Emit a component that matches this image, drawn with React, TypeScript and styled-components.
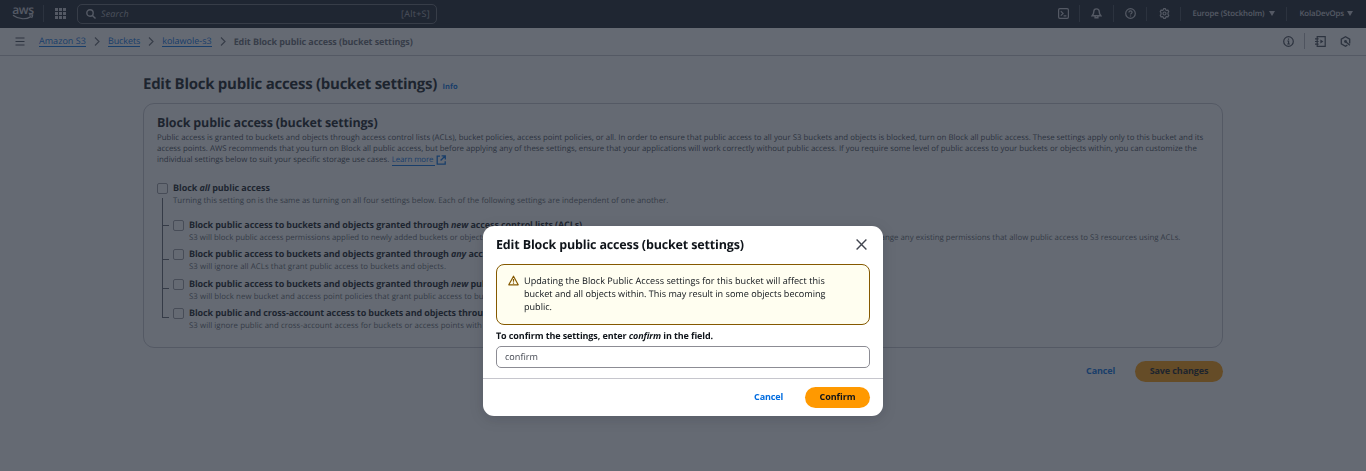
import React, { ReactNode } from 'react';
import styled, { createGlobalStyle, css } from 'styled-components';

const GlobalStyle = createGlobalStyle`
  * { box-sizing: border-box; }
  html, body { margin: 0; padding: 0; height: 471px; overflow: hidden; }
  body {
    background: #ffffff;
    color: #0f141a;
    font-family: 'Open Sans', 'Noto Sans', sans-serif;
    font-size: 9px;
    text-rendering: geometricPrecision;
  }
  svg { display: block; flex: none; }
`;

type Track = { $track?: number };
const track = css<Track>`
  letter-spacing: ${(p) => p.$track ?? 0}px;
  white-space: nowrap;
`;

const Page = styled.div`
  height: 471px;
  overflow: hidden;
`;

/* Top navigation */
const TopNav = styled.header`
  height: 28px;
  display: flex;
  align-items: center;
  background: #161d26;
  color: #c6c6cd;
  padding: 0 13px 1px 12px;
`;
const Logo = styled.div`
  width: 22px;
  height: 17px;
  display: flex;
  flex-direction: column;
  align-items: center;
  font-size: 12px;
  font-weight: 600;
  line-height: 9px;
  letter-spacing: -0.3px;
`;
const NavRule = styled.span<{ $tall?: boolean; $gap: number; $after: number }>`
  width: 1px;
  height: ${(p) => (p.$tall ? 17 : 14)}px;
  margin: 0 ${(p) => p.$after}px 0 ${(p) => p.$gap}px;
  background: #424650;
`;
const SearchBox = styled.div`
  width: 360px;
  height: 20px;
  margin-left: 11px;
  padding: 0 6px 0 8px;
  display: flex;
  align-items: center;
  border: 1px solid #656871;
  border-radius: 5px;
`;
const SearchHint = styled.span<Track>`
  ${track}
  margin-left: 5px;
  font-size: 9px;
  font-style: italic;
  color: #a4a4ad;
`;
const Shortcut = styled.span<Track>`
  ${track}
  margin-left: auto;
  font-size: 9px;
  color: #a4a4ad;
`;
const NavTools = styled.div`
  margin-left: auto;
  display: flex;
  align-items: center;
`;
const NavMenu = styled.span<Track>`
  ${track}
  font-size: 7.8px;
  font-weight: 600;
`;
const Caret = styled.span<{ $gap: number }>`
  margin-left: ${(p) => p.$gap}px;
  border: 3px solid transparent;
  border-top: 5px solid #c6c6cd;
  border-bottom: 0;
`;

/* Breadcrumb bar */
const CrumbBar = styled.nav`
  height: 28px;
  display: flex;
  align-items: center;
  padding: 0 15px 1px 15px;
  border-bottom: 1px solid #c6c6cd;
`;
const MenuIcon = styled.span`
  display: flex;
  margin-right: 14px;
  color: #424650;
`;
const Crumb = styled.a<Track>`
  ${track}
  height: 12px;
  line-height: 11px;
  font-size: 9px;
  color: #006ce0;
  border-bottom: 1px solid #006ce0;
`;
const CurrentCrumb = styled.span<Track>`
  ${track}
  font-size: 9px;
  font-weight: 700;
  color: #656871;
`;
const CrumbChevron = styled.span`
  display: flex;
  width: 22px;
  justify-content: center;
  color: #656871;
`;
const CrumbTools = styled.div`
  margin-left: auto;
  display: flex;
  align-items: center;
  color: #424650;
`;
const CrumbRule = styled.span`
  width: 1px;
  height: 16px;
  margin: 0 10px;
  background: #b4b4bb;
`;
const IconGap = styled.span`
  width: 14px;
`;

/* Page content */
const Main = styled.main`
  width: 1080px;
  margin: 0 auto;
  padding-top: 17px;
`;
const TitleRow = styled.div`
  height: 30px;
  display: flex;
  align-items: baseline;
`;
const PageTitle = styled.h1<Track>`
  ${track}
  margin: 0;
  font-size: 15px;
  font-weight: 700;
  line-height: 22px;
`;
const InfoLink = styled.a<Track>`
  ${track}
  margin-left: 5.5px;
  font-size: 7.5px;
  font-weight: 700;
  color: #006ce0;
`;
const Panel = styled.section`
  height: 245px;
  border: 1px solid #c6c6cd;
  border-radius: 11px;
  padding: 10px 13px 0;
`;
const PanelTitle = styled.h2<Track>`
  ${track}
  margin: 0 0 1px;
  font-size: 12.5px;
  font-weight: 700;
  line-height: 18px;
`;
const Summary = styled.div`
  color: #424650;
  font-size: 7.885px;
  line-height: 11px;
`;
const SummaryLine = styled.div<Track>`
  ${track}
  display: flex;
`;
const LearnMore = styled.a`
  display: flex;
  margin-left: 2.5px;
  height: 11px;
  color: #006ce0;
`;
const LearnText = styled.span<Track>`
  ${track}
  height: 11px;
  line-height: 11px;
  border-bottom: 1px solid #006ce0;
  padding-right: 2px;
  margin-right: 1px;
`;
const Option = styled.div`
  height: 29.33px;
  display: grid;
  grid-template-columns: 11px 1fr;
  column-gap: 5px;
`;
const Checkbox = styled.span`
  width: 11px;
  height: 11px;
  margin-top: 1px;
  border: 1px solid #9a9aa2;
  border-radius: 2px;
`;
const OptionLabel = styled.div<Track>`
  ${track}
  font-size: 9px;
  font-weight: 700;
  line-height: 12px;
`;
const OptionHint = styled.div<Track>`
  ${track}
  margin-top: 1px;
  font-size: 7.87px;
  line-height: 13px;
  color: #5c5f69;
`;
const AllAccess = styled.div`
  margin-top: 16px;
  height: 16px;
`;
const Tree = styled.div`
  display: flex;
  margin-left: 5px;
`;
const Branches = styled.div`
  width: 7px;
  margin-right: 4px;
`;
const Branch = styled.div<{ $height: number }>`
  height: ${(p) => p.$height}px;
  border: solid #5f636d;
  border-width: 0 0 1px 1px;
`;
const Options = styled.div`
  padding-top: 21px;
`;
const Actions = styled.div<{ $top: number; $right: number }>`
  display: flex;
  justify-content: flex-end;
  align-items: center;
  padding: ${(p) => p.$top}px ${(p) => p.$right}px 0 0;
`;
const TextButton = styled.button<Track>`
  ${track}
  border: 0;
  padding: 0 0 2px;
  background: none;
  font: 700 9px 'Open Sans', 'Noto Sans', sans-serif;
  color: #006ce0;
`;
const PrimaryButton = styled.button<Track & { $width: number; $gap: number }>`
  ${track}
  width: ${(p) => p.$width}px;
  height: 21px;
  margin-left: ${(p) => p.$gap}px;
  padding: 0 0 2px;
  border: 0;
  border-radius: 11px;
  background: #ff9900;
  font: 700 9px 'Open Sans', 'Noto Sans', sans-serif;
  color: #0f141a;
`;

/* Dialog */
const Backdrop = styled.div`
  position: fixed;
  inset: 0;
  display: flex;
  justify-content: center;
  align-items: flex-start;
  padding-top: 226px;
  background: rgba(35, 43, 55, 0.7);
`;
const Dialog = styled.div`
  width: 400px;
  height: 190px;
  border-radius: 11px;
  background: #ffffff;
  box-shadow: 0 3px 14px 1px rgba(0, 7, 22, 0.12);
`;
const DialogHead = styled.div`
  display: flex;
  justify-content: space-between;
  align-items: center;
  height: 38px;
  padding: 0 16px 2px 13px;
`;
const DialogTitle = styled.h2<Track>`
  ${track}
  margin: 0;
  font-size: 12.5px;
  font-weight: 700;
`;
const CloseButton = styled.span`
  display: flex;
  color: #424650;
`;
const DialogBody = styled.div`
  padding: 0 13px;
  height: 115px;
  border-bottom: 1px solid #c6c6cd;
`;
const Warning = styled.div`
  height: 61px;
  display: flex;
  padding: 9px 11px;
  border: 1px solid #855900;
  border-radius: 8px;
  background: #fffef0;
`;
const WarningIcon = styled.span`
  margin-top: 1px;
  color: #855900;
`;
const WarningText = styled.div`
  margin-left: 5px;
  font-size: 9.08px;
  line-height: 13.2px;
`;
const WarningLine = styled.div<Track>`
  ${track}
`;
const FieldLabel = styled.div<Track>`
  ${track}
  margin-top: 4px;
  font-size: 9px;
  font-weight: 700;
  line-height: 14px;
`;
const Field = styled.div`
  height: 22px;
  margin-top: 3px;
  padding: 0 8px 1px;
  display: flex;
  align-items: center;
  border: 1px solid #8c8c94;
  border-radius: 5px;
  color: #424650;
`;
const FieldValue = styled.span<Track>`
  ${track}
  font-size: 9.1px;
`;

const Icon = ({ w, h, sw = 1.2, children }: { w: number; h: number; sw?: number; children: ReactNode }) => (
  <svg width={w} height={h} viewBox={`0 0 ${w} ${h}`} fill="none" stroke="currentColor" strokeWidth={sw}>
    {children}
  </svg>
);

const Chevron = () => (
  <CrumbChevron>
    <Icon w={6} h={9}><path d="M1 .5 5 4.5 1 8.5" /></Icon>
  </CrumbChevron>
);

const options: { label: ReactNode; hint: string }[] = [
  {
    label: <>Block public access to buckets and objects granted through <em>new</em> access control lists (ACLs)</>,
    hint: "S3 will block public access permissions applied to newly added buckets or objects, and prevent the creation of new public access ACLs for existing buckets and objects. This setting doesn't change any existing permissions that allow public access to S3 resources using ACLs.",
  },
  {
    label: <>Block public access to buckets and objects granted through <em>any</em> access control lists (ACLs)</>,
    hint: 'S3 will ignore all ACLs that grant public access to buckets and objects.',
  },
  {
    label: <>Block public access to buckets and objects granted through <em>new</em> public bucket or access point policies</>,
    hint: 'S3 will block new bucket and access point policies that grant public access to buckets and objects.',
  },
  {
    label: <>Block public and cross-account access to buckets and objects through <em>any</em> public bucket or access point policies</>,
    hint: 'S3 will ignore public and cross-account access for buckets or access points with policies that grant public access to buckets and objects.',
  },
];
const branchHeights = [28, 34, 29, 29];

export default function App() {
  return (
    <Page>
      <GlobalStyle />
      <TopNav>
        <Logo>
          aws
          <Icon w={22} h={6} sw={1.3}><path d="M1 1.2C7 5.6 14 5.6 19 2.6M17 .8h3.6c.1 1-.3 2-1 3" /></Icon>
        </Logo>
        <NavRule $tall $gap={9} $after={11} />
        <svg width="11" height="11" viewBox="0 0 11 11" fill="currentColor">
          {[0, 4, 8].map((y) => [0, 4, 8].map((x) => <rect key={`${x}-${y}`} x={x} y={y} width="3" height="3" />))}
        </svg>
        <SearchBox>
          <Icon w={10} h={10} sw={1.4}><circle cx="4" cy="4" r="3.2" /><path d="m6.4 6.4 3.1 3.1" /></Icon>
          <SearchHint $track={0.15}>Search</SearchHint>
          <Shortcut $track={0.27}>[Alt+S]</Shortcut>
        </SearchBox>
        <NavTools>
          <Icon w={11} h={11}>
            <rect x=".6" y=".6" width="9.8" height="9.8" rx="1.3" />
            <path d="m2.8 3.2 2.3 2.2-2.3 2.2M5.6 7.9h2.8" />
          </Icon>
          <NavRule $tall $gap={10} $after={11} />
          <Icon w={11} h={11} sw={1.4}>
            <path d="M5.5.9C3.7.9 2.8 2 2.8 3.6c0 2-.4 2.800-1.600 4.100h8.600C8.600 6.400 8.200 5.600 8.200 3.600 8.200 2 7.300.9 5.500.9Z" />
            <path d="M4.1 8v1.8h2.8V8" />
          </Icon>
          <NavRule $tall $gap={11} $after={11} />
          <Icon w={11} h={11}>
            <circle cx="5.5" cy="5.5" r="4.8" />
            <path d="M3.900 4.500c0-1 .7-1.600 1.600-1.600s1.600.6 1.600 1.400c0 1.100-1.600 1.100-1.600 2.200M5.500 7.400v1.200" />
          </Icon>
          <NavRule $gap={10} $after={12} />
          <Icon w={11} h={11}>
            <path d="M4.600.7h1.800l.4 1.200.8.5 1.300-.3.9 1.600-.8 1v1.600l.8 1-.9 1.600-1.300-.3-.8.5-.4 1.200H4.600l-.4-1.200-.8-.5-1.300.3-.9-1.600.8-1V4.700l-.8-1 .9-1.600 1.300.3.8-.5Z" strokeLinejoin="round" />
            <circle cx="5.5" cy="5.5" r="1.5" />
          </Icon>
          <NavRule $gap={10.5} $after={11} />
          <NavMenu $track={-0.08}>Europe (Stockholm)</NavMenu>
          <Caret $gap={4} />
          <NavRule $gap={11} $after={13} />
          <NavMenu $track={-0.11}>KolaDevOps</NavMenu>
          <Caret $gap={3} />
        </NavTools>
      </TopNav>
      <CrumbBar>
        <MenuIcon><Icon w={10} h={9}><path d="M.5 1h9M.5 4.5h9M.5 8h9" /></Icon></MenuIcon>
        <Crumb $track={0.04}>Amazon S3</Crumb>
        <Chevron />
        <Crumb $track={-0.1}>Buckets</Crumb>
        <Chevron />
        <Crumb>kolawole-s3</Crumb>
        <Chevron />
        <CurrentCrumb $track={-0.095}>Edit Block public access (bucket settings)</CurrentCrumb>
        <CrumbTools>
          <Icon w={11} h={11}>
            <circle cx="5.5" cy="5.5" r="4.8" />
            <path d="M5.500 2.600v1.200M4.300 5h1.300v2.900M4.200 8h2.700" />
          </Icon>
          <CrumbRule />
          <Icon w={11} h={11}>
            <path d="M2.200.7h8v9.600h-8ZM0 2.900h3.600M0 5.500h3.600M0 8.100h3.600" />
            <path d="M5.400 3.500v4l3-2Z" fill="currentColor" stroke="none" />
          </Icon>
          <IconGap />
          <Icon w={11} h={11} sw={1.3}>
            <path d="M7.400 9.200 5.500 10.200 1.300 7.900V3.100L5.500.8l4.200 2.300v4.300" />
            <path d="M9.900 9.200 6 6" />
            <circle cx="5.5" cy="5.5" r="1.4" fill="currentColor" stroke="none" />
          </Icon>
        </CrumbTools>
      </CrumbBar>
      <Main>
        <TitleRow>
          <PageTitle $track={-0.26}>Edit Block public access (bucket settings)</PageTitle>
          <InfoLink>Info</InfoLink>
        </TitleRow>
        <Panel>
          <PanelTitle $track={-0.17}>Block public access (bucket settings)</PanelTitle>
          <Summary>
            <SummaryLine>Public access is granted to buckets and objects through access control lists (ACLs), bucket policies, access point policies, or all. In order to ensure that public access to all your S3 buckets and objects is blocked, turn on Block all public access. These settings apply only to this bucket and its</SummaryLine>
            <SummaryLine>access points. AWS recommends that you turn on Block all public access, but before applying any of these settings, ensure that your applications will work correctly without public access. If you require some level of public access to your buckets or objects within, you can customize the</SummaryLine>
            <SummaryLine>
              individual settings below to suit your specific storage use cases.
              <LearnMore>
                <LearnText $track={-0.1}>Learn more</LearnText>
                <Icon w={10} h={10} sw={1.3}>
                  <path d="M4 1.200H1.200v8h8V6.300M5.600.8h3.700v3.700M9.100 1 4.600 5.500" />
                </Icon>
              </LearnMore>
            </SummaryLine>
          </Summary>
          <AllAccess>
            <Option>
              <Checkbox />
              <div>
                <OptionLabel $track={-0.08}>Block <em>all</em> public access</OptionLabel>
                <OptionHint $track={0.03}>Turning this setting on is the same as turning on all four settings below. Each of the following settings are independent of one another.</OptionHint>
              </div>
            </Option>
          </AllAccess>
          <Tree>
            <Branches>{branchHeights.map((h, i) => <Branch key={i} $height={h} />)}</Branches>
            <Options>
              {options.map((o, i) => (
                <Option key={i}>
                  <Checkbox />
                  <div>
                    <OptionLabel $track={-0.105}>{o.label}</OptionLabel>
                    <OptionHint $track={i ? 0.05 : 0}>{o.hint}</OptionHint>
                  </div>
                </Option>
              ))}
            </Options>
          </Tree>
        </Panel>
        <Actions $top={13} $right={0}>
          <TextButton $track={-0.15}>Cancel</TextButton>
          <PrimaryButton $track={-0.1} $width={88} $gap={20}>Save changes</PrimaryButton>
        </Actions>
      </Main>
      <Backdrop>
        <Dialog>
          <DialogHead>
            <DialogTitle $track={-0.15}>Edit Block public access (bucket settings)</DialogTitle>
            <CloseButton><Icon w={11} h={11} sw={1.4}><path d="m.6.6 9.8 9.8M10.4.6.6 10.4" /></Icon></CloseButton>
          </DialogHead>
          <DialogBody>
            <Warning>
              <WarningIcon>
                <Icon w={11} h={11}>
                  <path d="M5.5 1.2 10.2 9.8H.8Z" strokeLinejoin="round" />
                  <path d="M5.5 4v2.8M5.5 7.5v1.2" />
                </Icon>
              </WarningIcon>
              <WarningText>
                <WarningLine $track={0.045}>Updating the Block Public Access settings for this bucket will affect this</WarningLine>
                <WarningLine>bucket and all objects within. This may result in some objects becoming</WarningLine>
                <WarningLine>public.</WarningLine>
              </WarningText>
            </Warning>
            <FieldLabel $track={-0.1}>To confirm the settings, enter <em>confirm</em> in the field.</FieldLabel>
            <Field><FieldValue>confirm</FieldValue></Field>
          </DialogBody>
          <Actions $top={8} $right={13}>
            <TextButton $track={-0.15}>Cancel</TextButton>
            <PrimaryButton $track={-0.05} $width={65} $gap={22}>Confirm</PrimaryButton>
          </Actions>
        </Dialog>
      </Backdrop>
    </Page>
  );
}
